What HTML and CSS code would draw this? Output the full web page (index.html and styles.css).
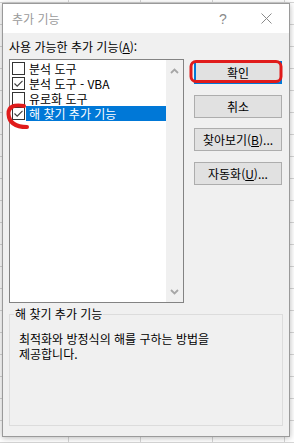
FILE: index.html
```html
<!DOCTYPE html>
<html lang="ko">
<head>
<meta charset="utf-8">
<link rel="stylesheet" href="styles.css">
</head>
<body>
<div class="dialog">
  <div class="titlebar">
    <span class="title">추가 기능</span>
    <span class="help">?</span>
    <span class="close"><svg width="11" height="11" viewBox="0 0 11 11"><path d="M0.5 0.5 L10.5 10.5 M10.5 0.5 L0.5 10.5" stroke="#8a8a8a" stroke-width="1" fill="none"/></svg></span>
  </div>
  <div class="body">
    <div class="label">사용 가능한 추가 기능(<u>A</u>):</div>
    <div class="main">
      <div class="list">
        <div class="items">
          <div class="item"><span class="cb"></span><span class="txt">분석 도구</span></div>
          <div class="item"><span class="cb"><svg width="11" height="11" viewBox="0 0 11 11"><path d="M1.5 5.5 L4.2 8.2 L9.5 2.8" stroke="#3c3c3c" stroke-width="1.1" fill="none"/></svg></span><span class="txt">분석 도구 - VBA</span></div>
          <div class="item"><span class="cb"></span><span class="txt">유로화 도구</span></div>
          <div class="item selected"><span class="cb"><svg width="11" height="11" viewBox="0 0 11 11"><path d="M1.5 5.5 L4.2 8.2 L9.5 2.8" stroke="#3c3c3c" stroke-width="1.1" fill="none"/></svg></span><span class="txt">해 찾기 추가 기능</span></div>
        </div>
        <div class="scroll">
          <svg width="9" height="6" viewBox="0 0 9 6"><path d="M1 5 L4.5 1.5 L8 5" stroke="#a6a6a6" stroke-width="1.8" fill="none"/></svg>
          <svg width="9" height="6" viewBox="0 0 9 6"><path d="M1 1 L4.5 4.5 L8 1" stroke="#a6a6a6" stroke-width="1.8" fill="none"/></svg>
        </div>
      </div>
      <div class="buttons">
        <button class="btn default">확인</button>
        <button class="btn">취소</button>
        <button class="btn">찾아보기(<u>B</u>)...</button>
        <button class="btn">자동화(<u>U</u>)...</button>
      </div>
    </div>
    <fieldset class="group">
      <legend>해 찾기 추가 기능</legend>
      <p class="desc">최적화와 방정식의 해를 구하는 방법을<br>제공합니다.</p>
    </fieldset>
  </div>
  <svg class="marks" width="294" height="443" viewBox="0 0 294 443">
    <rect x="191" y="61.5" width="90" height="20" rx="5" ry="5" fill="none" stroke="#e01b1b" stroke-width="3"/>
    <path d="M24 106 C14 104 8 107 8.5 114 C9 122 14 127 27 127" fill="none" stroke="#e01b1b" stroke-width="4" stroke-linecap="round"/>
  </svg>
</div>
</body>
</html>
```

FILE: styles.css
```css
html, body {
  margin: 0;
  padding: 0;
}
body {
  width: 294px;
  height: 443px;
  overflow: hidden;
  background-color: #ffffff;
  background-image:
    linear-gradient(to right, #d6d6d6 1px, transparent 1px),
    linear-gradient(to bottom, #d6d6d6 1px, transparent 1px);
  background-size: 72px 22px, 72px 22px;
  background-position: 68px 0, 0 2px;
  font-family: "Noto Sans CJK KR", "Noto Sans", sans-serif;
  font-size: 12px;
  color: #000;
}
.dialog {
  position: relative;
  box-sizing: border-box;
  width: 288px;
  height: 434px;
  margin: 3px 0 0 2px;
  border: 1px solid #9a9a9a;
  background: #f0f0f0;
  box-shadow: 0 1px 6px rgba(0, 0, 0, 0.28);
  display: flex;
  flex-direction: column;
}
.titlebar {
  height: 29px;
  background: #ffffff;
  display: flex;
  align-items: center;
  padding-left: 9px;
  flex: none;
}
.title {
  flex: 1;
  color: #9a9a9a;
  font-size: 12px;
  line-height: 16px;
}
.help {
  width: 40px;
  text-align: center;
  color: #8a8a8a;
  font-family: "Liberation Sans", sans-serif;
  font-size: 14px;
}
.close {
  width: 46px;
  display: flex;
  justify-content: center;
  align-items: center;
}
.body {
  flex: 1;
  display: flex;
  flex-direction: column;
  padding: 6px 6px 10px 6px;
}
.label {
  line-height: 16px;
  height: 16px;
}
.main {
  display: flex;
  gap: 10px;
  margin-top: 4px;
}
.list {
  box-sizing: border-box;
  width: 175px;
  height: 244px;
  border: 1px solid #838383;
  background: #ffffff;
  display: flex;
}
.items {
  width: 156px;
  padding-top: 1px;
}
.item {
  display: flex;
  height: 15px;
  padding-left: 2px;
  line-height: 15px;
}
.cb {
  box-sizing: border-box;
  width: 13px;
  height: 13px;
  margin-top: 1px;
  border: 1px solid #333333;
  background: #ffffff;
  display: flex;
  flex: none;
}
.txt {
  flex: 1;
  margin-left: 1px;
  padding-left: 3px;
  white-space: nowrap;
}
.selected .txt {
  background: #0078d7;
  color: #ffffff;
}
.scroll {
  width: 17px;
  background: #f0f0f0;
  display: flex;
  flex-direction: column;
  justify-content: space-between;
  align-items: center;
  padding: 8px 0 7px;
  box-sizing: border-box;
}
.buttons {
  width: 88px;
  padding-top: 2px;
  display: flex;
  flex-direction: column;
}
.btn {
  box-sizing: border-box;
  width: 88px;
  height: 23px;
  margin: 0 0 11px 0;
  padding: 0;
  border: 1px solid #adadad;
  background: #e1e1e1;
  font-family: "Noto Sans CJK KR", "Noto Sans", sans-serif;
  font-size: 12px;
  line-height: 16px;
  color: #000;
}
.btn:nth-child(2) {
  margin-bottom: 10px;
}
.btn.default {
  border-color: #0078d7;
  box-shadow: inset 0 0 0 1px #0078d7;
}
.group {
  flex: 1;
  margin: 3px 0 0 0;
  padding: 0 9px 0 4px;
  border: 1px solid #dcdcdc;
  min-width: 0;
}
.group legend {
  padding: 0 1px;
  line-height: 16px;
}
.desc {
  margin: 9px 0 0 5px;
  line-height: 15px;
}
.marks {
  position: absolute;
  left: -3px;
  top: -4px;
  pointer-events: none;
}
```
